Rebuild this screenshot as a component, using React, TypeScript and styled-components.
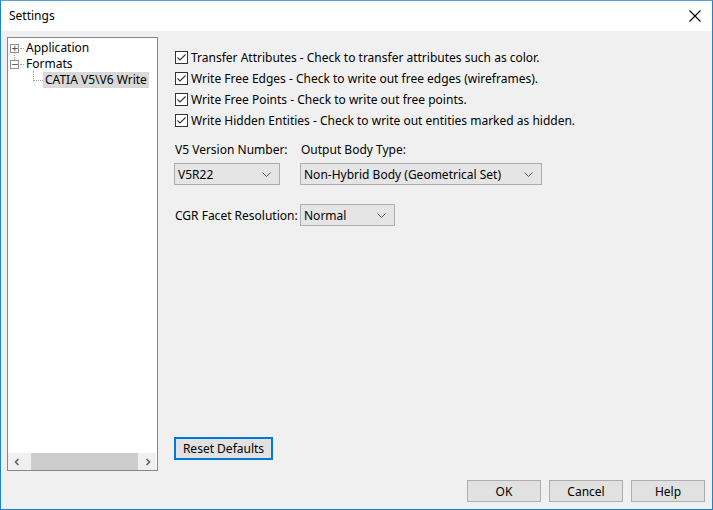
import React from 'react';
import styled, { createGlobalStyle } from 'styled-components';

const Global = createGlobalStyle`
  html, body {
    margin: 0;
    padding: 0;
    background: #ffffff;
  }
  body {
    font-family: "Noto Sans", "Open Sans", sans-serif;
    font-size: 12px;
    color: #000;
  }
`;

const CHECKS = [
  'Transfer Attributes - Check to transfer attributes such as color.',
  'Write Free Edges - Check to write out free edges (wireframes).',
  'Write Free Points - Check to write out free points.',
  'Write Hidden Entities - Check to write out entities marked as hidden.',
];

const App: React.FC = () => {
  return (
    <>
      <Global />
      <Window>
        <TitleBar>
          <Title>Settings</Title>
          <CloseButton aria-label="Close">
            <svg width="12" height="12" viewBox="0 0 12 12">
              <path d="M0.5 0.5 L11.5 11.5 M11.5 0.5 L0.5 11.5" stroke="#000" strokeWidth="1.1" />
            </svg>
          </CloseButton>
        </TitleBar>
        <Body>
          <Main>
            <TreePanel>
              <Tree>
                <TreeRow>
                  <Expander linkDown>+</Expander>
                  <Dots />
                  <TreeLabel>Application</TreeLabel>
                </TreeRow>
                <TreeRow>
                  <Expander>−</Expander>
                  <Dots />
                  <TreeLabel>Formats</TreeLabel>
                </TreeRow>
                <TreeRow indent={23}>
                  <Elbow />
                  <TreeLabel selected>CATIA V5\V6 Write</TreeLabel>
                </TreeRow>
              </Tree>
              <HScroll>
                <ScrollArrow>
                  <svg width="8" height="8" viewBox="0 0 8 8">
                    <path d="M5.5 1 L2.5 4 L5.5 7" stroke="#606060" strokeWidth="1.6" fill="none" />
                  </svg>
                </ScrollArrow>
                <ScrollTrack>
                  <ScrollThumb />
                </ScrollTrack>
                <ScrollArrow>
                  <svg width="8" height="8" viewBox="0 0 8 8">
                    <path d="M2.5 1 L5.5 4 L2.5 7" stroke="#606060" strokeWidth="1.6" fill="none" />
                  </svg>
                </ScrollArrow>
              </HScroll>
            </TreePanel>
            <Content>
              <CheckList>
                {CHECKS.map((text) => (
                  <CheckRow key={text}>
                    <CheckBox>
                      <svg width="11" height="11" viewBox="0 0 11 11">
                        <path d="M1.5 5.5 L4 8 L9.5 2.5" stroke="#333" strokeWidth="1.1" fill="none" />
                      </svg>
                    </CheckBox>
                    <span>{text}</span>
                  </CheckRow>
                ))}
              </CheckList>
              <FieldGrid>
                <FieldLabel>V5 Version Number:</FieldLabel>
                <FieldLabel>Output Body Type:</FieldLabel>
                <Combo width={106}>
                  <span>V5R22</span>
                  <Chevron />
                </Combo>
                <Combo width={242}>
                  <span>Non-Hybrid Body (Geometrical Set)</span>
                  <Chevron />
                </Combo>
              </FieldGrid>
              <InlineField>
                <FieldLabel>CGR Facet Resolution:</FieldLabel>
                <Combo width={95}>
                  <span>Normal</span>
                  <Chevron />
                </Combo>
              </InlineField>
              <Spacer />
              <ResetButton>Reset Defaults</ResetButton>
            </Content>
          </Main>
          <Footer>
            <DialogButton>OK</DialogButton>
            <DialogButton>Cancel</DialogButton>
            <DialogButton>Help</DialogButton>
          </Footer>
        </Body>
      </Window>
    </>
  );
};

const Chevron: React.FC = () => (
  <svg width="9" height="5" viewBox="0 0 9 5">
    <path d="M0.5 0.5 L4.5 4.5 L8.5 0.5" stroke="#555" strokeWidth="1" fill="none" />
  </svg>
);

export default App;

const Window = styled.div`
  width: 713px;
  height: 510px;
  box-sizing: border-box;
  border: 1px solid #1883d7;
  border-top-color: #5c9fd8;
  display: flex;
  flex-direction: column;
  background: #f0f0f0;
`;

const TitleBar = styled.div`
  height: 30px;
  flex: none;
  background: #ffffff;
  display: flex;
  align-items: center;
  justify-content: space-between;
  padding-left: 8px;
`;

const Title = styled.span`
  font-size: 12px;
  position: relative;
  top: -1px;
`;

const CloseButton = styled.div`
  width: 34px;
  height: 30px;
  display: flex;
  align-items: center;
  justify-content: center;
`;

const Body = styled.div`
  flex: 1;
  display: flex;
  flex-direction: column;
  padding: 6px 7px 7px 6px;
`;

const Main = styled.div`
  flex: 1;
  display: flex;
  gap: 16px;
`;

const TreePanel = styled.div`
  width: 151px;
  height: 434px;
  box-sizing: border-box;
  border: 1px solid #828790;
  background: #ffffff;
  display: flex;
  flex-direction: column;
`;

const Tree = styled.div`
  flex: 1;
  padding: 2px 0 0 2px;
  overflow: hidden;
`;

const TreeRow = styled.div<{ indent?: number }>`
  height: 16px;
  display: flex;
  align-items: center;
  padding-left: ${(p) => p.indent ?? 0}px;
  white-space: nowrap;
`;

const Expander = styled.span<{ linkDown?: boolean }>`
  position: relative;
  width: 9px;
  height: 9px;
  box-sizing: border-box;
  border: 1px solid #919191;
  font-size: 9px;
  line-height: 7px;
  text-align: center;
  color: #333;
  font-family: "DejaVu Sans", sans-serif;

  &::after {
    content: '';
    display: ${(p) => (p.linkDown ? 'block' : 'none')};
    position: absolute;
    left: 3px;
    top: 8px;
    height: 7px;
    border-left: 1px dotted #a0a0a0;
  }
`;

const Dots = styled.span`
  width: 4px;
  margin: 0 0 0 1px;
  border-top: 1px dotted #a0a0a0;
`;

const Elbow = styled.span`
  width: 9px;
  height: 9px;
  margin-top: -8px;
  border-left: 1px dotted #a0a0a0;
  border-bottom: 1px dotted #a0a0a0;
`;

const TreeLabel = styled.span<{ selected?: boolean }>`
  padding: 0 2px;
  line-height: 16px;
  background: ${(p) => (p.selected ? '#d9d9d9' : 'transparent')};
`;

const HScroll = styled.div`
  height: 17px;
  display: flex;
  background: #f0f0f0;
  margin: 0 1px 0 0;
`;

const ScrollArrow = styled.div`
  width: 17px;
  display: flex;
  align-items: center;
  justify-content: center;
`;

const ScrollTrack = styled.div`
  flex: 1;
  display: flex;
`;

const ScrollThumb = styled.div`
  width: 107px;
  margin-left: 6px;
  background: #cdcdcd;
`;

const Content = styled.div`
  flex: 1;
  display: flex;
  flex-direction: column;
  align-items: flex-start;
  padding-top: 14px;
`;

const CheckList = styled.div`
  display: flex;
  flex-direction: column;
  gap: 8px;
  margin-left: 1px;
`;

const CheckRow = styled.label`
  display: flex;
  align-items: center;
  gap: 3px;
  height: 13px;
  white-space: nowrap;
`;

const CheckBox = styled.span`
  width: 13px;
  height: 13px;
  box-sizing: border-box;
  border: 1px solid #333333;
  background: #ffffff;
  display: flex;
  align-items: center;
  justify-content: center;
`;

const FieldGrid = styled.div`
  display: grid;
  grid-template-columns: 106px auto;
  column-gap: 20px;
  row-gap: 5px;
  margin-top: 14px;
`;

const InlineField = styled.div`
  display: grid;
  grid-template-columns: 126px auto;
  align-items: center;
  margin-top: 19px;
`;

const FieldLabel = styled.span`
  white-space: nowrap;
  margin-left: 1px;
`;

const Combo = styled.div<{ width: number }>`
  width: ${(p) => p.width}px;
  height: 22px;
  box-sizing: border-box;
  border: 1px solid #adadad;
  background: #e5e5e5;
  display: flex;
  align-items: center;
  justify-content: space-between;
  padding: 0 8px 0 3px;
  white-space: nowrap;
`;

const Spacer = styled.div`
  flex: 1;
`;

const ResetButton = styled.div`
  width: 99px;
  height: 23px;
  box-sizing: border-box;
  border: 2px solid #0078d7;
  background: #e1e1e1;
  display: flex;
  align-items: center;
  justify-content: center;
  margin-bottom: 11px;
`;

const Footer = styled.div`
  display: flex;
  justify-content: flex-end;
  gap: 8px;
  margin-top: 9px;
`;

const DialogButton = styled.div`
  width: 74px;
  height: 22px;
  box-sizing: border-box;
  border: 1px solid #adadad;
  background: #e1e1e1;
  display: flex;
  align-items: center;
  justify-content: center;
`;
